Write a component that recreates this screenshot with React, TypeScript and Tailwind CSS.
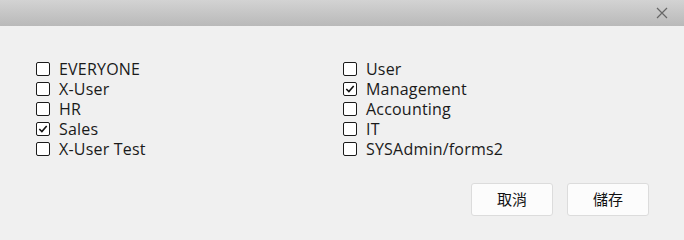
import React from "react";

const left = [
  { label: "EVERYONE", checked: false },
  { label: "X-User", checked: false },
  { label: "HR", checked: false },
  { label: "Sales", checked: true },
  { label: "X-User Test", checked: false },
];
const right = [
  { label: "User", checked: false },
  { label: "Management", checked: true },
  { label: "Accounting", checked: false },
  { label: "IT", checked: false },
  { label: "SYSAdmin/forms2", checked: false },
];

function Box({ checked }: { checked: boolean }) {
  return (
    <span className="w-[14px] h-[14px] border-[1.6px] border-[#1a1a1a] rounded-[2px] bg-white flex items-center justify-center shrink-0">
      {checked && (
        <svg width="10" height="10" viewBox="0 0 10 10">
          <path d="M1.3 5 L3.9 7.6 L8.7 2" fill="none" stroke="#111" strokeWidth="1.6" />
        </svg>
      )}
    </span>
  );
}

function Col({ items }: { items: { label: string; checked: boolean }[] }) {
  return (
    <div className="flex flex-col">
      {items.map((it) => (
        <label key={it.label} className="h-[20px] flex items-center gap-[9px]">
          <Box checked={it.checked} />
          <span className="text-[16px] tracking-[0.2px] text-[#1a1a1a] leading-none">{it.label}</span>
        </label>
      ))}
    </div>
  );
}

export default function App() {
  return (
    <div
      className="w-[684px] h-[240px] bg-[#f0f0f0] flex flex-col"
      style={{ fontFamily: '"Open Sans", "Noto Sans CJK TC", sans-serif' }}
    >
      <div className="h-[26px] bg-gradient-to-b from-[#d3d3d3] to-[#b9b9b9] flex items-center justify-end pr-[16px]">
        <svg width="12" height="12" viewBox="0 0 12 12">
          <path d="M1 1 L11 11 M11 1 L1 11" stroke="#666" strokeWidth="1.2" />
        </svg>
      </div>
      <div className="grid grid-cols-[307px_1fr] pl-[36px] pt-[33px]">
        <Col items={left} />
        <Col items={right} />
      </div>
      <div className="flex justify-end gap-[14px] pr-[35px] mt-[24px]">
        <button className="w-[82px] h-[33px] bg-[#fcfcfc] border border-[#dcdcdc] rounded-[3px] text-[15px] text-[#111]">
          取消
        </button>
        <button className="w-[82px] h-[33px] bg-[#fcfcfc] border border-[#dcdcdc] rounded-[3px] text-[15px] text-[#111]">
          儲存
        </button>
      </div>
    </div>
  );
}
